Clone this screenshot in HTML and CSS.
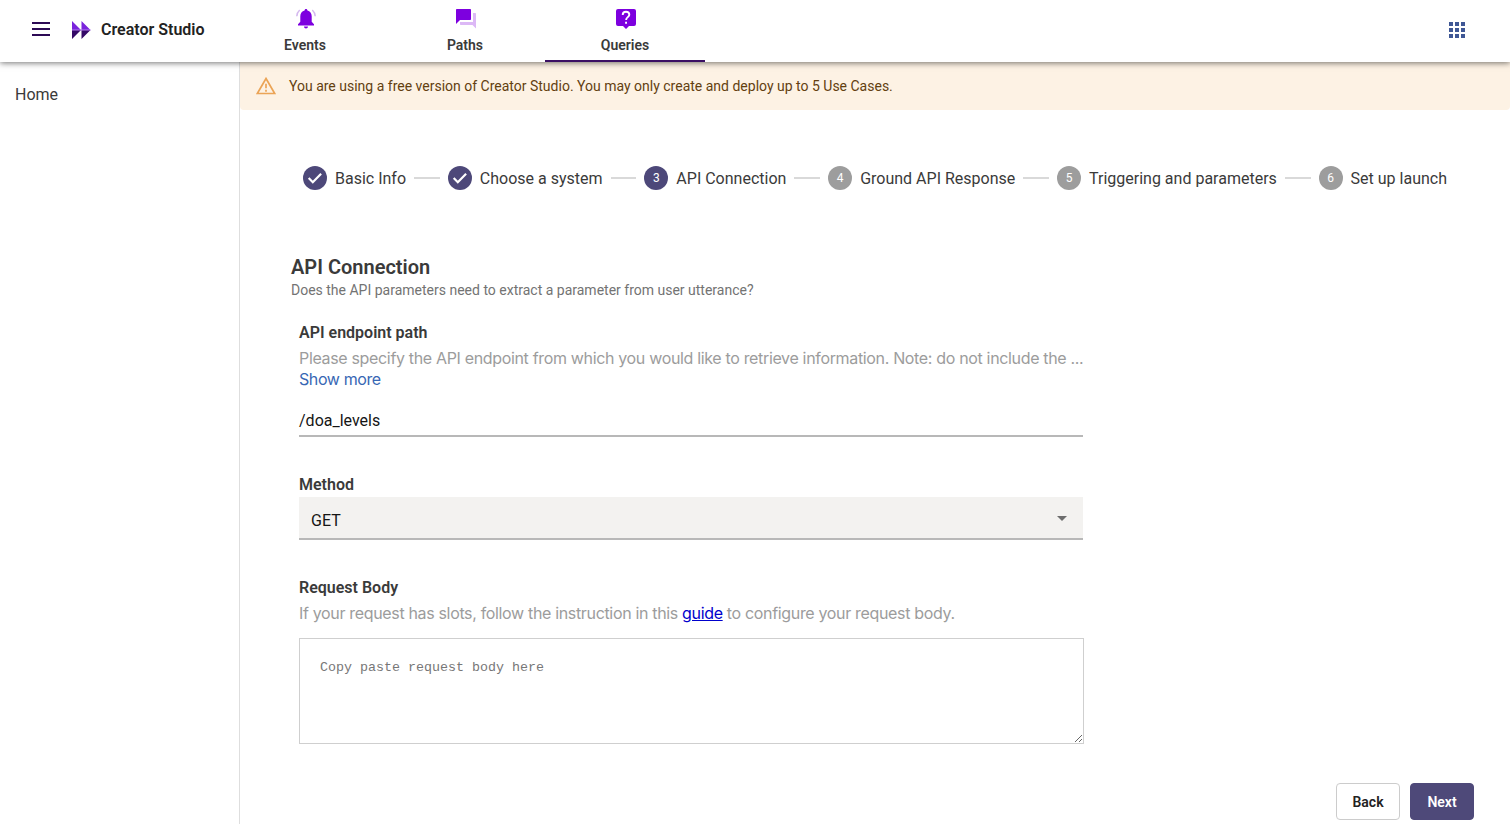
FILE: index.html
```html
<!DOCTYPE html>
<html lang="en">
<head>
<meta charset="utf-8">
<title>Creator Studio</title>
<link rel="stylesheet" href="styles.css">
</head>
<body>
<header class="topbar">
  <svg class="menu" width="18" height="14" viewBox="0 0 18 14"><path d="M0 1h18M0 7h18M0 13h18" stroke="#2d0a55" stroke-width="2"/></svg>
  <svg class="logo" width="19" height="18" viewBox="0 0 19 18"><path d="M0 0l9 9H0zM9.500 0l9 9h-9z" fill="#7a24dc"/><path d="M0 9h9l-9 9zM9.500 9h9l-9 9z" fill="#350a67"/><path d="M0 9h18.500" stroke="#b57bf0" stroke-width="1"/></svg>
  <span class="brand">Creator Studio</span>
  <nav class="tabs">
    <a class="tab"><svg width="20" height="20" viewBox="0 0 20 20"><path d="M3.700 1A9 9 0 0 0 .8 7.300M16.300 1a9 9 0 0 1 2.900 6.300" fill="none" stroke="#d4b8ee" stroke-width="1.500"/><path d="M10 0c-.9 0-1.400.6-1.400 1.500C5.900 2.200 4.300 4.300 4.300 7.300v5.500L2 15.200v1.300h16v-1.300l-2.300-2.400V7.300c0-3-1.600-5.100-4.300-5.800C11.400.6 10.900 0 10 0zM8 17.500h4c0 1.200-.9 2-2 2s-2-.8-2-2z" fill="#7d00df"/></svg><span>Events</span></a>
    <a class="tab"><svg width="20" height="20" viewBox="0 0 20 20"><path d="M17 4h2.300q.7 0 .7.700V19.500l-3.500-3.500H4.700q-.7 0-.7-.7V13h13z" fill="#dcb8f6"/><path d="M.8 0h13.400q.8 0 .8.800v9.400q0 .8-.8.800H4l-4 4V.8Q0 0 .8 0z" fill="#7d00df"/></svg><span>Paths</span></a>
    <a class="tab active"><svg width="20" height="20" viewBox="0 0 20 20"><path d="M2 0h16q2 0 2 2v13q0 2-2 2h-5l-3 3-3-3H2q-2 0-2-2V2Q0 0 2 0z" fill="#7d00df"/><path d="M6.700 5.900c0-2 1.400-3.200 3.300-3.200s3.300 1.200 3.300 3c0 2.400-3.200 2.500-3.200 5.300" fill="none" stroke="#fff" stroke-width="1.900"/><path d="M9.100 12.700H11v2H9.100z" fill="#fff"/></svg><span>Queries</span></a>
  </nav>
  <svg class="apps" width="16" height="16" viewBox="0 0 16 16" fill="#3f5795"><path d="M0 0h4v4H0zM6 0h4v4H6zM12 0h4v4h-4zM0 6h4v4H0zM6 6h4v4H6zM12 6h4v4h-4zM0 12h4v4H0zM6 12h4v4H6zM12 12h4v4h-4z"/></svg>
</header>
<div class="layout">
  <aside class="sidebar">Home</aside>
  <main class="main">
    <div class="banner">
      <svg width="20" height="18" viewBox="0 0 20 18"><path d="M10 1.500L18.700 16.500H1.300z" fill="none" stroke="#eba456" stroke-width="1.700"/><path d="M10 6.800v4.400M10 12.700v2" stroke="#eba456" stroke-width="1.700"/></svg>
      <span class="banner-text">You are using a free version of Creator Studio. You may only create and deploy up to 5 Use Cases.</span>
    </div>
    <div class="stepper">
      <div class="step"><span class="dot"><svg width="24" height="24" viewBox="0 0 24 24"><path d="M5.700 12l4.100 4.200 8.300-8.500" fill="none" stroke="#fff" stroke-width="2.200"/></svg></span>Basic Info</div><i class="line"></i>
      <div class="step"><span class="dot"><svg width="24" height="24" viewBox="0 0 24 24"><path d="M5.700 12l4.100 4.200 8.300-8.500" fill="none" stroke="#fff" stroke-width="2.200"/></svg></span>Choose a system</div><i class="line"></i>
      <div class="step"><span class="dot">3</span>API Connection</div><i class="line"></i>
      <div class="step"><span class="dot todo">4</span>Ground API Response</div><i class="line"></i>
      <div class="step"><span class="dot todo">5</span>Triggering and parameters</div><i class="line"></i>
      <div class="step"><span class="dot todo">6</span>Set up launch</div>
    </div>
    <section class="content">
      <h1 class="title">API Connection</h1>
      <p class="subtitle">Does the API parameters need to extract a parameter from user utterance?</p>
      <div class="form">
        <div class="field">
          <label class="label">API endpoint path</label>
          <p class="hint">Please specify the API endpoint from which you would like to retrieve information. Note: do not include the ...</p>
          <a class="more">Show more</a>
          <div class="input">/doa_levels</div>
        </div>
        <div class="field method">
          <label class="label">Method</label>
          <div class="select"><span>GET</span><svg width="10" height="5" viewBox="0 0 10 5"><path d="M0 0h10L5 5z" fill="#6d6d6d"/></svg></div>
        </div>
        <div class="field request">
          <label class="label">Request Body</label>
          <p class="hint">If your request has slots, follow the instruction in this <a class="guide">guide</a> to configure your request body.</p>
          <textarea class="body" placeholder="Copy paste request body here"></textarea>
        </div>
      </div>
    </section>
    <div class="actions"><button class="btn">Back</button><button class="btn primary">Next</button></div>
  </main>
</div>
</body>
</html>
```
FILE: styles.css
```css
* { box-sizing: border-box; }
body { margin: 0; height: 824px; overflow: hidden; background: #fff; color: #3a3a3a; font-family: Roboto, sans-serif; display: flex; flex-direction: column; }
h1, p { margin: 0; }
svg { display: block; flex: none; }
.topbar { position: relative; z-index: 1; height: 62px; flex: none; display: flex; align-items: center; padding: 0 45px 0 32px; background: #fff; box-shadow: 0 1px 6px rgba(0,0,0,.55); }
.menu { margin: 0 22px 4px 0; }
.logo { margin: 0 10px 2px 0; }
.brand { width: 184px; padding-bottom: 3px; font-size: 16px; font-weight: 600; color: #222; }
.tabs { display: flex; align-self: stretch; margin-left: -60px; }
.tab { width: 160px; display: flex; flex-direction: column; align-items: center; padding-top: 9px; gap: 8px; font-size: 14px; line-height: 16px; font-weight: 600; border-bottom: 2px solid transparent; }
.tab svg { margin-left: 2px; }
.tab.active { border-color: #3b0f63; }
.apps { margin-left: auto; margin-top: -2px; }
.layout { flex: 1; display: flex; min-height: 0; }
.sidebar { width: 240px; flex: none; border-right: 1px solid #dedede; padding: 23px 15px; font-size: 16px; line-height: 20px; }
.main { flex: 1; display: flex; flex-direction: column; min-width: 0; }
.banner { height: 48px; flex: none; display: flex; align-items: center; gap: 13px; padding-left: 16px; background: #fdf2e4; border-radius: 0 0 4px 4px; color: #633f10; font-size: 14px; }
.stepper { display: flex; align-items: center; gap: 8px; margin: 56px 63px 0; height: 24px; font-size: 16px; }
.step { display: flex; align-items: center; gap: 8px; white-space: nowrap; }
.dot { width: 24px; height: 24px; border-radius: 50%; background: #4d4879; color: #fff; font-size: 12px; display: flex; align-items: center; justify-content: center; }
.dot.todo { background: #9d9d9d; }
.line { flex: 1; height: 2px; background: #d9d9d9; }
.content { padding: 65px 0 0 51px; }
.title { font-size: 20px; line-height: 24px; font-weight: 600; }
.subtitle { margin-top: 3px; font-size: 14px; line-height: 16px; color: #737373; }
.form { width: 792px; padding: 25px 0 0 8px; }
.field { display: flex; flex-direction: column; }
.label { font-size: 16px; line-height: 20px; font-weight: 600; }
.hint { margin-top: 5px; font-family: Inter, sans-serif; font-size: 16px; line-height: 20px; letter-spacing: -.337px; color: #9c9c9c; white-space: nowrap; }
.more { margin-top: 1px; font-family: Inter, sans-serif; font-size: 16px; line-height: 20px; letter-spacing: -.4px; color: #3867b4; }
.input { margin-top: 22px; height: 26px; border-bottom: 2px solid #b8b8b8; font-size: 16px; line-height: 20px; color: #151515; }
.method { margin-top: 38px; }
.select { margin-top: 2px; height: 43px; padding: 5px 16px 0 12px; display: flex; align-items: center; justify-content: space-between; background: #f3f2f0; border-bottom: 2px solid #b8b8b8; font-size: 16px; color: #151515; }
.select svg { margin-top: -4px; }
.request { margin-top: 38px; }
.guide { color: #0000cc; text-decoration: underline; }
.body { display: block; margin: 15px 0 0; width: 785px; height: 106px; border: 1px solid #cfcfcf; outline: 0; padding: 21px 20px; font-family: "Liberation Mono", monospace; font-size: 13.333px; resize: both; }
.body::placeholder { color: #777; }
.actions { margin: 39px 36px 0 0; display: flex; justify-content: flex-end; gap: 10px; }
.btn { width: 64px; height: 37px; padding: 0; border: 1px solid #ccc; border-radius: 4px; background: #fff; color: #222; font: 600 14px Roboto, sans-serif; }
.btn.primary { background: #4e4979; border-color: #4e4979; color: #fff; }
```
